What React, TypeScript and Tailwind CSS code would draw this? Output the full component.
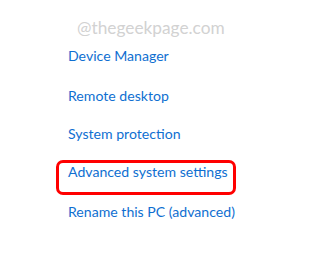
import React from "react";

export default function App() {
  const font = { fontFamily: 'Lato, "Noto Sans", sans-serif' };
  return (
    <div className="w-[323px] h-[267px] bg-white overflow-hidden pt-[16px]" style={font}>
      <div className="pl-[77px] text-[17.3px] leading-[24px] text-[#d2d2d2]">
        @thegeekpage.com
      </div>
      <div className="mt-[6px] flex flex-col pl-[68px] text-[14.1px] leading-[20px] text-[#0f6fd1]">
        <div className="h-[40px]">Device Manager</div>
        <div className="h-[38px]">Remote desktop</div>
        <div className="h-[38px]">System protection</div>
        <div className="h-[40px] relative">
          <span>Advanced system settings</span>
          <div className="absolute left-[-12px] top-[-2.5px] w-[180px] h-[35px] border-[3px] border-[#ff0000] rounded-[7px]" />
        </div>
        <div>Rename this PC (advanced)</div>
      </div>
    </div>
  );
}
